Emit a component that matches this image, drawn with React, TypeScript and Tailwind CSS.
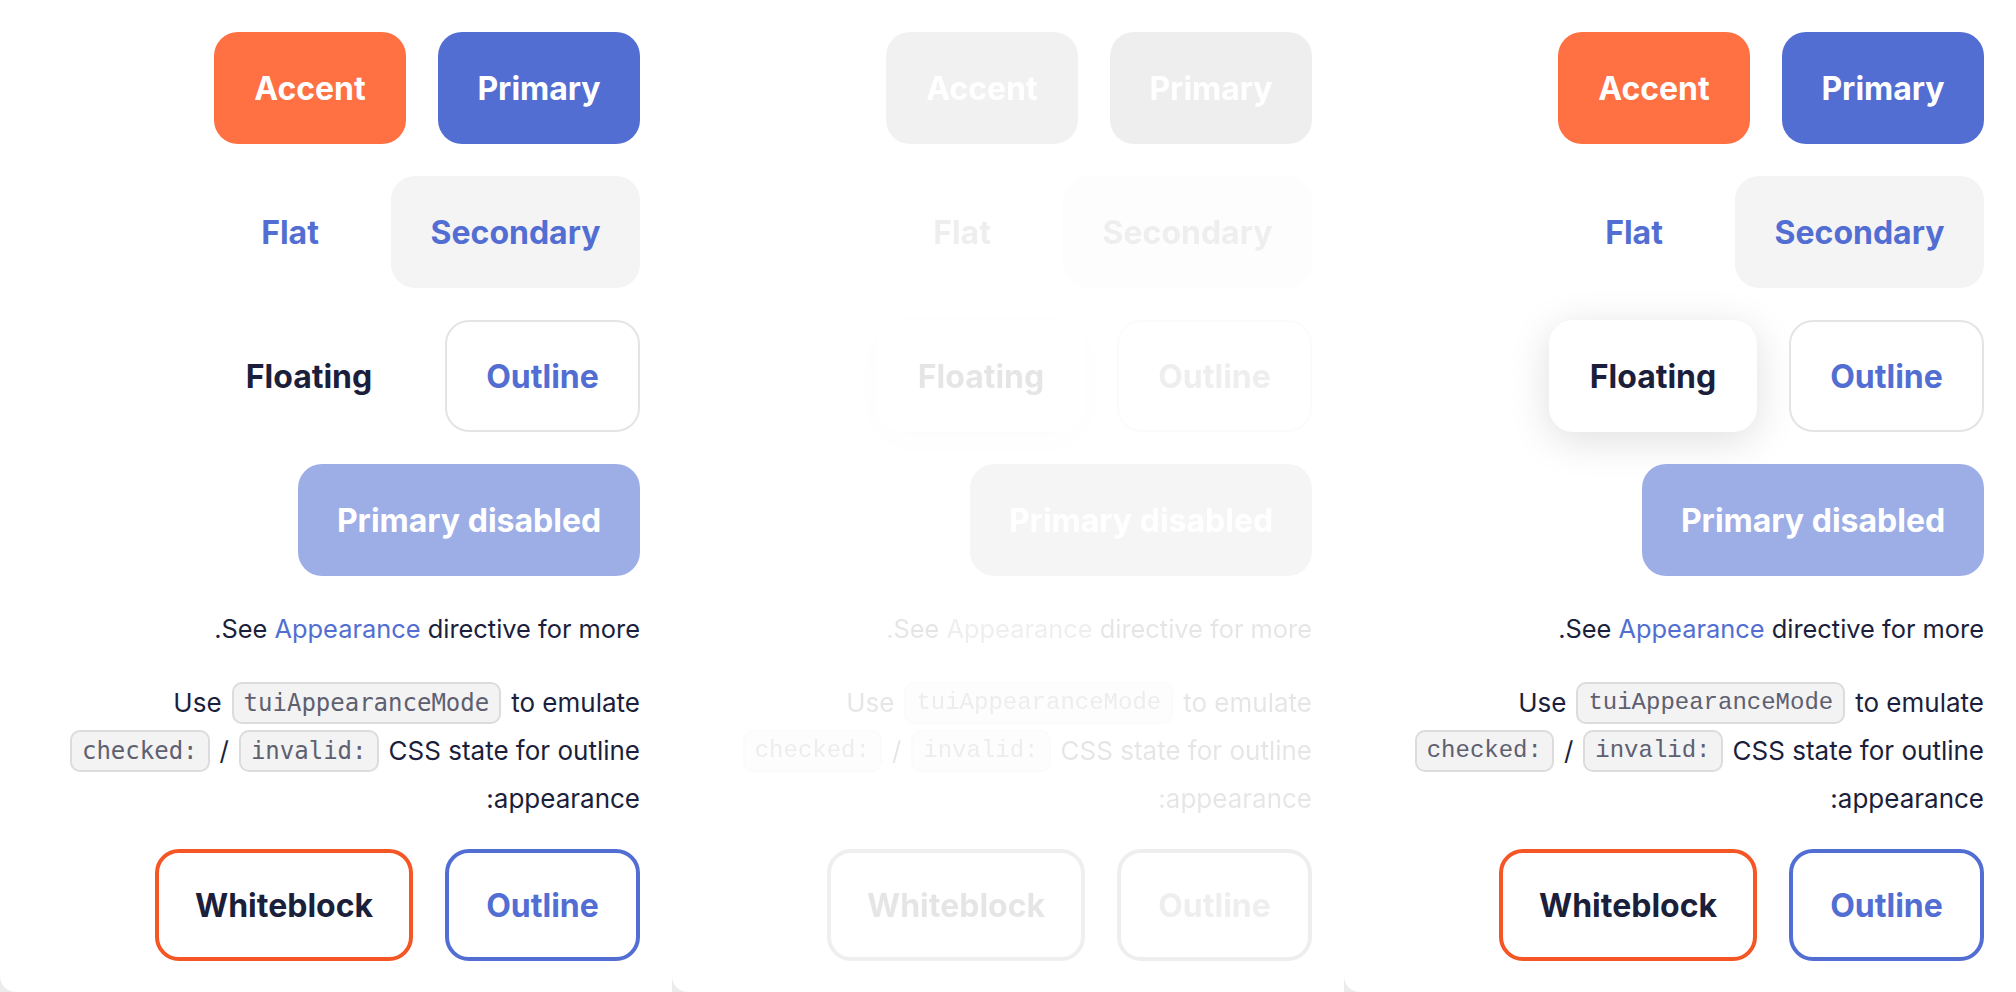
import React from "react";

type Variant = "rest" | "hover";

const Btn = ({ className, children }: { className: string; children: React.ReactNode }) => (
  <div
    className={
      "flex h-[112px] shrink-0 items-center justify-center rounded-[24px] pt-[2px] text-[32px] font-bold leading-none " +
      className
    }
  >
    {children}
  </div>
);

const Chip = ({ mono, children }: { mono: string; children: React.ReactNode }) => (
  <span
    className={
      "flex h-[42px] items-center rounded-[10px] border-2 border-[#dcdcdc] bg-[#f3f3f3] px-[10px] text-[24px] text-[#5e6070] " +
      mono
    }
  >
    {children}
  </span>
);

const Panel = ({ variant, faded }: { variant: Variant; faded?: boolean }) => {
  const hover = variant === "hover";
  const mono = hover ? "font-['Liberation_Mono',monospace]" : "font-['DejaVu_Sans_Mono',monospace]";

  return (
    <div className="flex h-full w-[672px] shrink-0 flex-col rounded-bl-[16px] bg-white pr-8 pt-8">
      <div className={"flex flex-col items-end " + (faded ? "opacity-[0.11] grayscale" : "")}>
        {/* buttons */}
        <div className="flex justify-end gap-8">
          <Btn className="w-[192px] bg-[#ff7043] text-white">Accent</Btn>
          <Btn className="w-[202px] bg-[#526ed3] text-white">Primary</Btn>
        </div>
        <div className="mt-8 flex justify-end gap-8">
          <Btn className="w-[138px] text-[#526ed3]">Flat</Btn>
          <Btn className="w-[249px] bg-[#f4f4f4] text-[#526ed3]">Secondary</Btn>
        </div>
        <div className="mt-8 flex justify-end gap-8">
          <Btn
            className={
              "w-[208px] text-[#1b1f3b] " +
              (hover ? "bg-white shadow-[0_8px_40px_rgba(0,0,0,0.13)]" : "")
            }
          >
            Floating
          </Btn>
          <Btn className="w-[195px] border-2 border-[#e4e4e4] bg-white text-[#526ed3]">Outline</Btn>
        </div>
        <div className="mt-8 flex justify-end">
          <Btn className="w-[342px] bg-[#9daee6] text-white">Primary disabled</Btn>
        </div>

        {/* notes */}
        <p className="mt-[29px] text-[25.4px] leading-[48px] text-[#1b1f3b]">
          .See <span className="text-[#526ed3]">Appearance</span> directive for more
        </p>

        <div className="mt-[26px] flex flex-col items-end text-[26px] leading-[48px] text-[#1b1f3b]">
          <div className="flex h-[48px] items-center gap-[10px]">
            <span>Use</span>
            <Chip mono={mono}>tuiAppearanceMode</Chip>
            <span>to emulate</span>
          </div>
          <div className="flex h-[48px] items-center gap-[10px]">
            <Chip mono={mono}>checked:</Chip>
            <span>/</span>
            <Chip mono={mono}>invalid:</Chip>
            <span>CSS state for outline</span>
          </div>
          <div className="flex h-[48px] items-center">
            <span>:appearance</span>
          </div>
        </div>

        <div className="mt-[26px] flex justify-end gap-8">
          <Btn className="w-[258px] border-4 border-[#f45725] bg-white text-[#1b1f3b]">Whiteblock</Btn>
          <Btn className="w-[195px] border-4 border-[#526ed3] bg-white text-[#526ed3]">Outline</Btn>
        </div>
      </div>
    </div>
  );
};

export default function App() {
  return (
    <div className="flex h-screen w-full overflow-hidden bg-[#ececec] font-['Inter',sans-serif]">
      <Panel variant="rest" />
      <Panel variant="hover" faded />
      <Panel variant="hover" />
    </div>
  );
}
